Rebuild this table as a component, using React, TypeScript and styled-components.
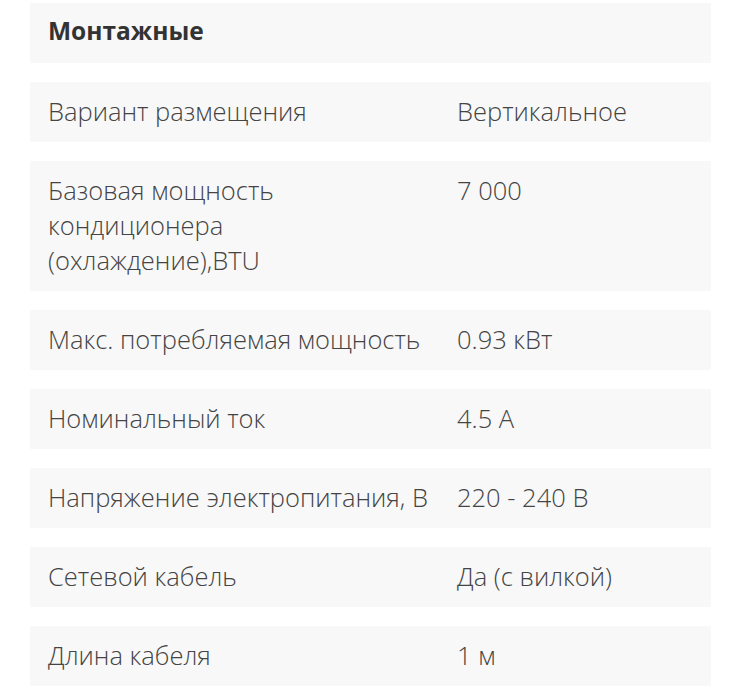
import React from 'react';
import styled, { createGlobalStyle } from 'styled-components';

const GlobalStyle = createGlobalStyle`
  body {
    margin: 0;
    background: #fff;
    font-family: 'Open Sans', 'Noto Sans', sans-serif;
  }
`;

const SpecTable = styled.section`
  display: flex;
  flex-direction: column;
  gap: 19px;
  width: 681px;
  padding: 3px 0 0 30px;
`;

const HeaderRow = styled.div`
  display: flex;
  align-items: center;
  height: 60px;
  box-sizing: border-box;
  padding: 0 18px 6px;
  background: #f8f8f8;
  font-size: 24.5px;
  font-weight: 700;
  color: #333;
`;

const Row = styled.div`
  display: grid;
  grid-template-columns: 390px 1fr;
  column-gap: 19px;
  padding: 12px 18px 13px;
  background: #f8f8f8;
  font-size: 25.5px;
  font-weight: 300;
  line-height: 35px;
  color: #444;
`;

const Label = styled.div``;

const Value = styled.div``;

interface SpecItem {
  label: string;
  value: string;
}

const specs: SpecItem[] = [
  { label: 'Вариант размещения', value: 'Вертикальное' },
  { label: 'Базовая мощность кондиционера (охлаждение),BTU', value: '7 000' },
  { label: 'Макс. потребляемая мощность', value: '0.93 кВт' },
  { label: 'Номинальный ток', value: '4.5 A' },
  { label: 'Напряжение электропитания, В', value: '220 - 240 В' },
  { label: 'Сетевой кабель', value: 'Да (с вилкой)' },
  { label: 'Длина кабеля', value: '1 м' },
];

const App: React.FC = () => (
  <>
    <GlobalStyle />
    <SpecTable>
      <HeaderRow>Монтажные</HeaderRow>
      {specs.map(({ label, value }) => (
        <Row key={label}>
          <Label>{label}</Label>
          <Value>{value}</Value>
        </Row>
      ))}
    </SpecTable>
  </>
);

export default App;
